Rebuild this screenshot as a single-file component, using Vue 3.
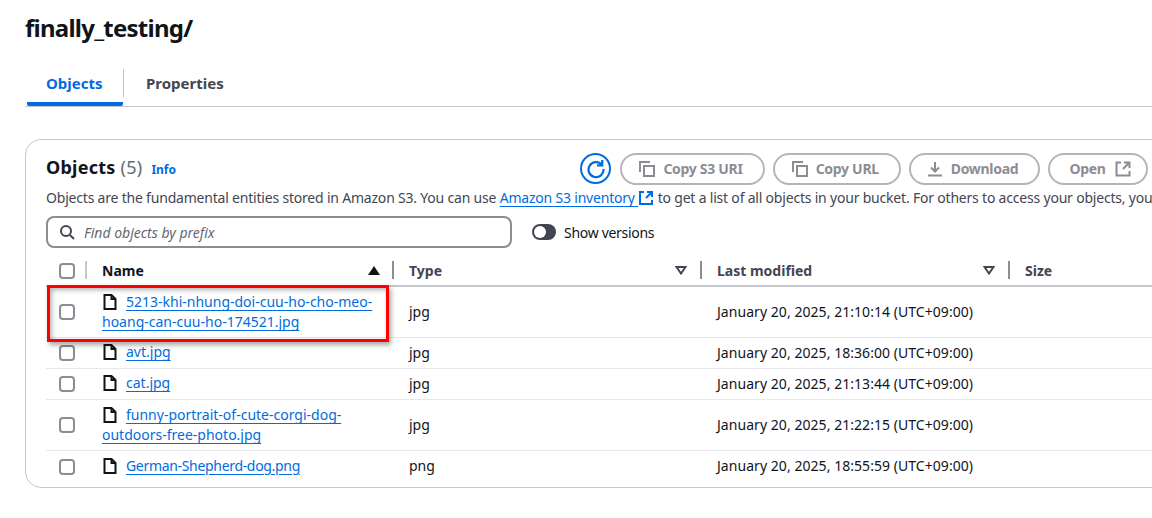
<script setup>
const rows = [
  { name: '5213-khi-nhung-doi-cuu-ho-cho-meo-hoang-can-cuu-ho-174521.jpg', type: 'jpg', date: 'January 20, 2025, 21:10:14 (UTC+09:00)', tall: true },
  { name: 'avt.jpg', type: 'jpg', date: 'January 20, 2025, 18:36:00 (UTC+09:00)' },
  { name: 'cat.jpg', type: 'jpg', date: 'January 20, 2025, 21:13:44 (UTC+09:00)' },
  { name: 'funny-portrait-of-cute-corgi-dog-outdoors-free-photo.jpg', type: 'jpg', date: 'January 20, 2025, 21:22:15 (UTC+09:00)', tall: true },
  { name: 'German-Shepherd-dog.png', type: 'png', date: 'January 20, 2025, 18:55:59 (UTC+09:00)', tight: true },
]
</script>

<template>
  <div class="page">
    <h1 class="title">finally_testing/</h1>
    <div class="tabs">
      <div class="tab active">Objects</div>
      <div class="tab-sep"></div>
      <div class="tab">Properties</div>
    </div>
    <section class="card">
      <div class="head">
        <div class="head-title"><h2>Objects <span class="count">(5)</span></h2><span class="info">Info</span></div>
        <div class="actions">
          <button class="refresh" aria-label="Refresh">
            <svg width="20" height="20" viewBox="0 0 16 16" fill="none" stroke="#006ce0" stroke-width="1.800"><path d="M12.700 4.800A6 6 0 1 0 14 8"/><path d="M13 .8v4.200H8.800"/></svg>
          </button>
          <button class="btn lead w145"><svg class="ic" viewBox="0 0 16 16"><path d="M5 5h10v10H5zM1 11V1h10"/></svg>Copy S3 URI</button>
          <button class="btn lead w127"><svg class="ic" viewBox="0 0 16 16"><path d="M5 5h10v10H5zM1 11V1h10"/></svg>Copy URL</button>
          <button class="btn lead w131"><svg class="ic" viewBox="0 0 16 16"><path d="M8 1v9M4 6.500 8 10.500l4-4M1 14.500h14"/></svg>Download</button>
          <button class="btn trail w99">Open<svg class="ic" viewBox="0 0 16 16"><path d="M6 1.500H1.500v13h13V10M9 1.500h5.500V7M14 2 8 8"/></svg></button>
        </div>
      </div>
      <p class="desc">Objects are the fundamental entities stored in Amazon S3. You can use <a class="lnk">Amazon S3 inventory <svg class="ext" viewBox="0 0 16 16"><path d="M6 2H2v12h12v-4M9 2h5v5M14 2 8 8"/></svg></a> to get a list of all objects in your bucket. For others to access your objects, you'll need to explicitly grant them permissions.</p>
      <div class="filter">
        <label class="search">
          <svg width="16" height="16" viewBox="0 0 16 16" fill="none" stroke="#424650" stroke-width="2"><circle cx="7" cy="7" r="5"/><path d="m11 11 4 4"/></svg>
          <span>Find objects by prefix</span>
        </label>
        <span class="toggle"><i></i></span>
        <span class="toggle-label">Show versions</span>
      </div>
      <div class="table">
        <div class="tr th">
          <div class="cell c0"><span class="box"></span></div>
          <div class="cell c1 sep">Name<svg class="up" viewBox="0 0 12 9"><path d="M6 0l6 9H0z" fill="#0f141a"/></svg></div>
          <div class="cell c2 sep">Type<svg class="down" viewBox="0 0 12 9"><path d="M1.500 1h9L6 7.500z" fill="none" stroke="#424650" stroke-width="2"/></svg></div>
          <div class="cell c3 sep">Last modified<svg class="down" viewBox="0 0 12 9"><path d="M1.500 1h9L6 7.500z" fill="none" stroke="#424650" stroke-width="2"/></svg></div>
          <div class="cell c4 sep">Size</div>
        </div>
        <div v-for="r in rows" :key="r.name" class="tr td" :class="{ tall: r.tall }">
          <div class="cell c0"><span class="box"></span></div>
          <div class="cell c1">
            <div class="name" :class="{ tight: r.tight }"><svg class="file" viewBox="0 0 16 16"><path d="M2.500 1h7l4 4v10h-11z"/><path d="M9.500 1v4h4"/></svg><a>{{ r.name }}</a></div>
          </div>
          <div class="cell c2">{{ r.type }}</div>
          <div class="cell c3 date">{{ r.date }}</div>
          <div class="cell c4"></div>
        </div>
      </div>
      <div class="mark"></div>
    </section>
  </div>
</template>

<style>
html, body { margin: 0; background: #fff; }
</style>

<style scoped>
.page { position: relative; width: 1152px; height: 518px; overflow: hidden; padding: 14px 0 0 25px; box-sizing: border-box; font-family: "Noto Sans", sans-serif; font-size: 14px; color: #0f141a; }
.title { margin: 0; font-size: 24px; line-height: 28px; font-weight: 700; letter-spacing: -.75px; }
.tabs { display: flex; align-items: flex-end; height: 65px; width: 1127px; border-bottom: 1px solid #c6c6cd; box-sizing: border-box; }
.tab { font-size: 15px; font-weight: 700; color: #424650; height: 43px; line-height: 26px; padding-top: 7px; box-sizing: border-box; }
.tab.active { color: #006ce0; width: 96px; border-bottom: 4px solid #006ce0; border-radius: 2px; margin-left: 2px; padding-left: 19px; }
.tab-sep { width: 1px; height: 28px; background: #c6c6cd; margin: 0 22px 9px 0; align-self: flex-end; }
.card { position: relative; width: 1300px; height: 349px; margin-top: 32px; border: 1px solid #c6c6cd; border-radius: 16px; padding: 13px 0 0 20px; box-sizing: border-box; }
.head { display: flex; align-items: center; height: 31px; }
.head-title { width: 534px; display: flex; align-items: baseline; gap: 9px; margin-top: -3px; }
h2 { margin: 0; font-size: 18px; font-weight: 700; line-height: 28px; letter-spacing: .25px; }
.count { font-weight: 400; color: #656871; }
.info { font-size: 12px; font-weight: 700; color: #006ce0; }
.actions { display: flex; align-items: center; gap: 8px; }
.refresh { width: 31px; height: 31px; border: 2px solid #006ce0; border-radius: 50%; background: #fff; padding: 0; display: flex; align-items: center; justify-content: center; box-sizing: border-box; margin-right: 1px; }
.btn { display: flex; align-items: center; justify-content: center; gap: 8px; height: 32px; box-sizing: border-box; border: 2px solid #b4b4bb; border-radius: 16px; background: #fff; color: #8c8c94; font: 700 14px "Noto Sans", sans-serif; letter-spacing: -.3px; padding: 0; }
.btn.lead { padding-right: 3px; }
.btn.trail { padding-left: 5px; gap: 9px; }
.w145 { width: 145px; } .w127 { width: 127.500px; } .w131 { width: 131px; } .w99 { width: 100px; }
.ic { width: 16px; height: 16px; fill: none; stroke: #8c8c94; stroke-width: 2; }
.desc { margin: 4px 0 0; line-height: 20px; white-space: nowrap; color: #424650; font-size: 14px; letter-spacing: -.2px; }
.lnk { color: #006ce0; text-decoration: underline; text-underline-offset: 3px; }
.ext { width: 16px; height: 16px; fill: none; stroke: #006ce0; stroke-width: 2; vertical-align: -3px; }
.filter { display: flex; align-items: center; margin-top: 8px; height: 32px; }
.search { width: 466px; height: 32px; box-sizing: border-box; border: 2px solid #8c8c94; border-radius: 8px; display: flex; align-items: center; gap: 9px; padding-left: 11px; font-style: italic; color: #656871; font-size: 14px; }
.toggle { width: 24px; height: 16px; margin-left: 20px; background: #424650; border-radius: 8px; position: relative; }
.toggle i { position: absolute; left: 2px; top: 2px; width: 12px; height: 12px; border-radius: 50%; background: #fff; }
.toggle-label { margin-left: 8px; letter-spacing: -.3px; padding-top: 1px; }
.table { margin-top: 9px; }
.tr { display: grid; grid-template-columns: 39px 307px 308px 308px 1fr; }
.th { height: 30px; border-bottom: 2px solid #c6c6cd; box-sizing: border-box; font-weight: 700; color: #424650; }
.td { height: 31px; border-bottom: 1px solid #e8e8ec; box-sizing: border-box; }
.td.tall { height: 51px; }
.td:last-child { border-bottom: 0; }
.cell { display: flex; align-items: center; padding-left: 17px; position: relative; padding-bottom: 2px; box-sizing: border-box; }
.td.tall .cell { padding-bottom: 1px; }
.td.tall .c1 { padding-bottom: 0; }
.c0 { padding-left: 13px; }
.td .c0 { padding-bottom: 0; }
.date { letter-spacing: .05px; }
.th .cell { padding-bottom: 1px; }
.sep::before { content: ""; position: absolute; left: 0; top: 4px; height: 18px; width: 2px; background: #c6c6cd; }
.c2.sep::before, .c3.sep::before, .c4.sep::before { background: #8c8c94; }
.box { display: block; width: 16px; height: 16px; box-sizing: border-box; border: 2px solid #8c8c94; border-radius: 4px; background: #fff; }
.th .c1 { color: #0f141a; }
.up, .down { position: absolute; right: 12px; top: 9px; width: 12px; height: 9px; }
.down { right: 13px; }
.name { line-height: 20px; width: 276px; }
.name.tight a { letter-spacing: -.32px; }
.name a { color: #006ce0; text-decoration: underline; text-underline-offset: 3px; }
.file { width: 16px; height: 16px; fill: none; stroke: #0f141a; stroke-width: 2; margin-right: 8px; vertical-align: -3px; }
.mark { position: absolute; left: 21px; top: 145px; width: 342px; height: 57px; box-sizing: border-box; border: 3px solid #f00; box-shadow: 2px 3px 5px rgba(0,0,0,.35), inset 2px 2px 5px rgba(0,0,0,.3); pointer-events: none; }
</style>
